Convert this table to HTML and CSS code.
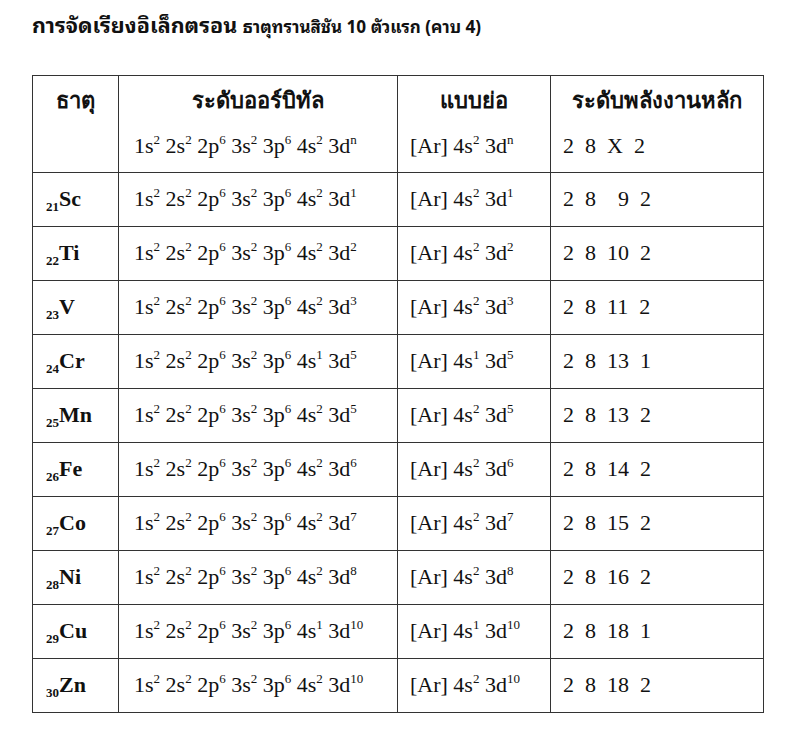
FILE: index.html
```html
<!DOCTYPE html>
<html lang="th">
<head>
<meta charset="utf-8">
<link rel="stylesheet" href="styles.css">
</head>
<body>
<h1 class="title">การจัดเรียงอิเล็กตรอน <span class="subtitle">ธาตุทรานสิชัน 10 ตัวแรก (คาบ 4)</span></h1>
<table class="grid">
  <colgroup>
    <col class="c1"><col class="c2"><col class="c3"><col class="c4">
  </colgroup>
  <thead>
    <tr class="head">
      <th>ธาตุ</th>
      <th>ระดับออร์บิทัล</th>
      <th>แบบย่อ</th>
      <th>ระดับพลังงานหลัก</th>
    </tr>
    <tr class="general">
      <td></td>
      <td>1s<sup>2</sup> 2s<sup>2</sup> 2p<sup>6</sup> 3s<sup>2</sup> 3p<sup>6</sup> 4s<sup>2</sup> 3d<sup>n</sup></td>
      <td>[Ar] 4s<sup>2</sup> 3d<sup>n</sup></td>
      <td class="shell">2  8  X  2</td>
    </tr>
  </thead>
  <tbody>
    <tr>
      <td class="el"><sub>21</sub>Sc</td>
      <td>1s<sup>2</sup> 2s<sup>2</sup> 2p<sup>6</sup> 3s<sup>2</sup> 3p<sup>6</sup> 4s<sup>2</sup> 3d<sup>1</sup></td>
      <td>[Ar] 4s<sup>2</sup> 3d<sup>1</sup></td>
      <td class="shell">2  8    9  2</td>
    </tr>
    <tr>
      <td class="el"><sub>22</sub>Ti</td>
      <td>1s<sup>2</sup> 2s<sup>2</sup> 2p<sup>6</sup> 3s<sup>2</sup> 3p<sup>6</sup> 4s<sup>2</sup> 3d<sup>2</sup></td>
      <td>[Ar] 4s<sup>2</sup> 3d<sup>2</sup></td>
      <td class="shell">2  8  10  2</td>
    </tr>
    <tr>
      <td class="el"><sub>23</sub>V</td>
      <td>1s<sup>2</sup> 2s<sup>2</sup> 2p<sup>6</sup> 3s<sup>2</sup> 3p<sup>6</sup> 4s<sup>2</sup> 3d<sup>3</sup></td>
      <td>[Ar] 4s<sup>2</sup> 3d<sup>3</sup></td>
      <td class="shell">2  8  11  2</td>
    </tr>
    <tr>
      <td class="el"><sub>24</sub>Cr</td>
      <td>1s<sup>2</sup> 2s<sup>2</sup> 2p<sup>6</sup> 3s<sup>2</sup> 3p<sup>6</sup> 4s<sup>1</sup> 3d<sup>5</sup></td>
      <td>[Ar] 4s<sup>1</sup> 3d<sup>5</sup></td>
      <td class="shell">2  8  13  1</td>
    </tr>
    <tr>
      <td class="el"><sub>25</sub>Mn</td>
      <td>1s<sup>2</sup> 2s<sup>2</sup> 2p<sup>6</sup> 3s<sup>2</sup> 3p<sup>6</sup> 4s<sup>2</sup> 3d<sup>5</sup></td>
      <td>[Ar] 4s<sup>2</sup> 3d<sup>5</sup></td>
      <td class="shell">2  8  13  2</td>
    </tr>
    <tr>
      <td class="el"><sub>26</sub>Fe</td>
      <td>1s<sup>2</sup> 2s<sup>2</sup> 2p<sup>6</sup> 3s<sup>2</sup> 3p<sup>6</sup> 4s<sup>2</sup> 3d<sup>6</sup></td>
      <td>[Ar] 4s<sup>2</sup> 3d<sup>6</sup></td>
      <td class="shell">2  8  14  2</td>
    </tr>
    <tr>
      <td class="el"><sub>27</sub>Co</td>
      <td>1s<sup>2</sup> 2s<sup>2</sup> 2p<sup>6</sup> 3s<sup>2</sup> 3p<sup>6</sup> 4s<sup>2</sup> 3d<sup>7</sup></td>
      <td>[Ar] 4s<sup>2</sup> 3d<sup>7</sup></td>
      <td class="shell">2  8  15  2</td>
    </tr>
    <tr>
      <td class="el"><sub>28</sub>Ni</td>
      <td>1s<sup>2</sup> 2s<sup>2</sup> 2p<sup>6</sup> 3s<sup>2</sup> 3p<sup>6</sup> 4s<sup>2</sup> 3d<sup>8</sup></td>
      <td>[Ar] 4s<sup>2</sup> 3d<sup>8</sup></td>
      <td class="shell">2  8  16  2</td>
    </tr>
    <tr>
      <td class="el"><sub>29</sub>Cu</td>
      <td>1s<sup>2</sup> 2s<sup>2</sup> 2p<sup>6</sup> 3s<sup>2</sup> 3p<sup>6</sup> 4s<sup>1</sup> 3d<sup>10</sup></td>
      <td>[Ar] 4s<sup>1</sup> 3d<sup>10</sup></td>
      <td class="shell">2  8  18  1</td>
    </tr>
    <tr>
      <td class="el"><sub>30</sub>Zn</td>
      <td>1s<sup>2</sup> 2s<sup>2</sup> 2p<sup>6</sup> 3s<sup>2</sup> 3p<sup>6</sup> 4s<sup>2</sup> 3d<sup>10</sup></td>
      <td>[Ar] 4s<sup>2</sup> 3d<sup>10</sup></td>
      <td class="shell">2  8  18  2</td>
    </tr>
  </tbody>
</table>
</body>
</html>
```
FILE: styles.css
```css
html, body {
  margin: 0;
  padding: 0;
  background: #ffffff;
}
body {
  padding: 8px 0 0 32px;
  color: #111;
  font-family: "Liberation Serif", "Norasi", "Times New Roman", serif;
}
.title {
  margin: 0;
  font-family: "Noto Sans Thai Looped", "Sarabun", "Noto Sans", "Liberation Sans", sans-serif;
  font-size: 21.5px;
  font-weight: 700;
  line-height: 32px;
  color: #111;
}
.subtitle {
  font-size: 17px;
  font-weight: 700;
}
.grid {
  margin-top: 33px;
  border-collapse: collapse;
  table-layout: fixed;
  width: 731px;
  border: 1.5px solid #2a2a2a;
}
.c1 { width: 86px; }
.c2 { width: 279px; }
.c3 { width: 153px; }
.c4 { width: 213px; }
.grid th,
.grid td {
  border: 1px solid #333;
  padding: 0 0 0 15px;
  font-size: 22px;
  line-height: 26px;
  color: #111;
  vertical-align: middle;
  white-space: pre;
}
.grid th {
  font-weight: 700;
  text-align: center;
  padding: 0;
  height: 49px;
  border-bottom: none;
  font-size: 22px;
}
.grid .general td {
  border-top: none;
  height: 47px;
  vertical-align: top;
  padding-top: 8px;
  box-sizing: border-box;
}
.grid tbody td {
  height: 53px;
}
.grid td:nth-child(2) { padding-left: 15px; }
.grid td:nth-child(3) { padding-left: 12px; }
.grid td:nth-child(4) { padding-left: 12px; }
.grid td.el {
  font-weight: 700;
  padding-left: 13px;
  font-size: 22px;
}
.el sub {
  font-size: 13px;
  vertical-align: -5px;
  line-height: 0;
}
sup {
  font-size: 13px;
  vertical-align: 9px;
  line-height: 0;
}
```
